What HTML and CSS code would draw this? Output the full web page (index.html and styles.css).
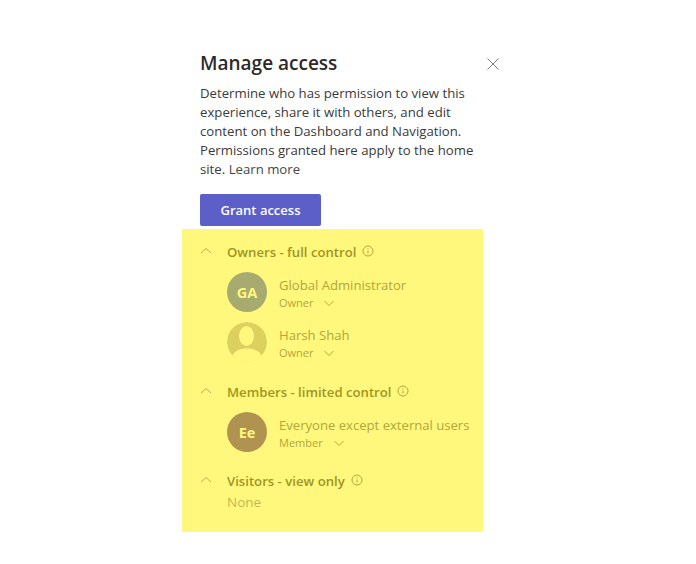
FILE: index.html
```html
<!DOCTYPE html>
<html lang="en">
<head>
<meta charset="utf-8">
<title>Manage access</title>
<link rel="stylesheet" href="styles.css">
</head>
<body>
<div class="dialog">
  <header class="head">
    <h1 class="title">Manage access</h1>
    <svg class="close" width="14" height="14" viewBox="0 0 14 14"><path d="M1.500 1.500l11 11M12.500 1.500l-11 11"/></svg>
  </header>
  <p class="desc">Determine who has permission to view this experience, share it with others, and edit content on the Dashboard and Navigation. Permissions granted here apply to the home site. <span class="link">Learn more</span></p>
  <button class="grant">Grant access</button>
  <div class="panel">
    <section class="group">
      <div class="group-head">
        <svg class="caret" width="12" height="8" viewBox="0 0 12 8"><path d="M1 6l5-4.500 5 4.500"/></svg>
        <span class="group-title">Owners - full control</span>
        <svg class="info" width="12" height="12" viewBox="0 0 12 12"><circle cx="6" cy="6" r="5"/><path d="M6 5.500v3M6 3.200v1"/></svg>
      </div>
      <div class="person">
        <div class="avatar ga">GA</div>
        <div class="who">
          <div class="name">Global Administrator</div>
          <div class="role">Owner <svg class="chev" width="10" height="7" viewBox="0 0 10 7"><path d="M.5 1l4.500 4.500 4.500-4.500"/></svg></div>
        </div>
      </div>
      <div class="person">
        <div class="avatar">
          <svg width="40" height="40" viewBox="0 0 40 40"><circle class="photo-bg" cx="20" cy="20" r="20"/><ellipse class="photo-fg" cx="19.500" cy="14" rx="7.500" ry="10"/><path class="photo-fg" d="M0 41V35L5 34C8 28 14 26.500 20 26.500S32 28 35 34L40 35V41z"/></svg>
        </div>
        <div class="who">
          <div class="name">Harsh Shah</div>
          <div class="role">Owner <svg class="chev" width="10" height="7" viewBox="0 0 10 7"><path d="M.5 1l4.500 4.500 4.500-4.500"/></svg></div>
        </div>
      </div>
    </section>
    <section class="group group-members">
      <div class="group-head">
        <svg class="caret" width="12" height="8" viewBox="0 0 12 8"><path d="M1 6l5-4.500 5 4.500"/></svg>
        <span class="group-title">Members - limited control</span>
        <svg class="info" width="12" height="12" viewBox="0 0 12 12"><circle cx="6" cy="6" r="5"/><path d="M6 5.500v3M6 3.200v1"/></svg>
      </div>
      <div class="person">
        <div class="avatar ee">Ee</div>
        <div class="who">
          <div class="name">Everyone except external users</div>
          <div class="role">Member <svg class="chev" width="10" height="7" viewBox="0 0 10 7"><path d="M.5 1l4.500 4.500 4.500-4.500"/></svg></div>
        </div>
      </div>
    </section>
    <section class="group">
      <div class="group-head">
        <svg class="caret" width="12" height="8" viewBox="0 0 12 8"><path d="M1 6l5-4.500 5 4.500"/></svg>
        <span class="group-title">Visitors - view only</span>
        <svg class="info" width="12" height="12" viewBox="0 0 12 12"><circle cx="6" cy="6" r="5"/><path d="M6 5.500v3M6 3.200v1"/></svg>
      </div>
      <div class="none">None</div>
    </section>
  </div>
</div>
</body>
</html>
```
FILE: styles.css
```css
html, body { margin: 0; padding: 0; background: #fff; }
body {
  width: 696px;
  height: 564px;
  overflow: hidden;
  font-family: "Open Sans", "Noto Sans", sans-serif;
  color: #252423;
}
.dialog { width: 301px; margin-left: 182px; padding-top: 51px; }
.head { display: flex; justify-content: space-between; align-items: center; height: 26px; width: 318px; box-sizing: border-box; padding-left: 18px; }
.title { margin: -2px 0 0; font-size: 19px; line-height: 26px; font-weight: 600; color: #2b2a29; }
.close { fill: none; stroke: #7f7f7f; stroke-width: 1; }
.desc { margin: 7px 0 0 18px; width: 283px; font-size: 13.2px; line-height: 19px; color: #3b3a39; }
.link { color: #484644; }
.grant {
  display: block;
  margin: 15px 0 3px 18px;
  width: 121px;
  height: 32px;
  border: 0;
  border-radius: 2px;
  background: #5b5fc7;
  color: #fff;
  font: 600 13px/32px "Open Sans", sans-serif;
  padding: 0;
}
.panel { background: #fff87c; height: 303px; box-sizing: border-box; padding-top: 13px; }
.group { margin-bottom: 20px; }
.group-members { margin-bottom: 19px; }
.group-head { display: flex; align-items: center; height: 20px; }
.caret { fill: none; stroke: #b9ae4f; stroke-width: 1; margin-left: 18px; margin-top: -3px; }
.group-title { margin-left: 15px; font-size: 13.15px; line-height: 20px; font-weight: 600; color: #9f9522; }
.info { fill: none; stroke: #a89d38; stroke-width: .9; margin-left: 6px; margin-top: -3px; }
.person { display: flex; align-items: flex-start; margin: 10px 0 0 45px; height: 40px; }
.avatar { width: 40px; height: 40px; border-radius: 50%; flex: none; display: flex; align-items: center; justify-content: center; overflow: hidden; font-size: 14.5px; font-weight: 700; color: #fff87c; }
.ga { background: #a8ab70; }
.ee { background: #b09350; }
.photo-bg { fill: #dcd05f; }
.photo-fg { fill: #fff87c; }
.who { margin-left: 12px; }
.name { font-size: 13.1px; line-height: 20px; color: #b2a63a; white-space: nowrap; margin-top: 3px; }
.role { font-size: 11px; line-height: 16px; color: #b2a63a; }
.chev { fill: none; stroke: #b2a63a; stroke-width: 1; margin-left: 8px; }
.none { margin-left: 45px; font-size: 13.5px; line-height: 20px; color: #c3b950; margin-top: 1px; }
```
